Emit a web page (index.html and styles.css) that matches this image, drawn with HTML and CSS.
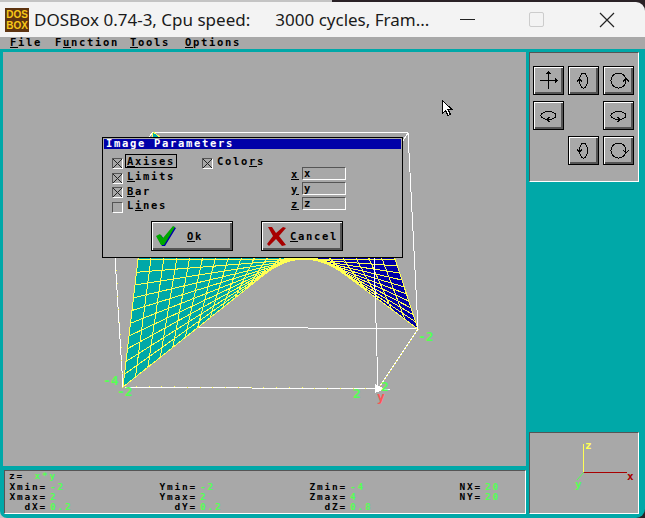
FILE: index.html
```html
<!DOCTYPE html>
<html lang="en">
  <head>
    <meta charset="UTF-8" />
    <meta name="viewport" content="width=device-width, initial-scale=1.0" />
    <title>DOSBox</title>
    <link rel="stylesheet" href="styles.css">
  </head>
  <body>
    <div class="window">
      <header class="titlebar">
        <div class="app-icon"><span>DOS</span><span>BOX</span></div>
        <div class="app-title">DOSBox 0.74-3, Cpu speed:     <span class="app-speed">3000 cycles, Fram...</span></div>
        <div class="win-buttons">
          <span class="win-min"></span>
          <span class="win-max"></span>
          <svg class="win-close" width="16" height="16" viewBox="0 0 16 16"><path d="M1 1L15 15M15 1L1 15" stroke="#222" stroke-width="1.2" fill="none"/></svg>
        </div>
      </header>

      <nav class="menubar">
        <span class="menu-file"><u>F</u>ile</span>
        <span class="menu-function">F<u>u</u>nction</span>
        <span class="menu-tools"><u>T</u>ools</span>
        <span class="menu-options"><u>O</u>ptions</span>
      </nav>

      <div class="desktop">
        <div class="left-col">
          <div class="plot">
            <svg class="plot-svg" id="plot" width="523" height="414" viewBox="3 52 523 414">
              <g id="box-back" class="box-lines">
                <path d="M197 327L418 329"/>
                <path d="M197 327L153 132"/>
                <path d="M153 132L408 133"/>
              </g>
              <g id="mesh"></g>
              <g class="box-lines">
                <path d="M123 387L378 389"/>
                <path d="M378 389L418 329"/>
                <path d="M123 387L115 258L110 187"/>
                <path d="M378 389L372 189"/>
                <path d="M418 329L408 133"/>
                <path d="M408 133L372 189"/>
                <path d="M110 187L372 189"/>
                <path d="M110 187L153 132"/>
                <path d="M378 389L390 389"/>
              </g>
              <g id="ticks"></g>
              <path d="M375 384L385 389L375 393Z" fill="#fff"/>
              <text class="axis-num" x="103" y="385">-4</text>
              <text class="axis-num" x="117" y="396">-2</text>
              <text class="axis-num" x="353" y="398">2</text>
              <text class="axis-num" x="381" y="391">2</text>
              <text class="axis-num" x="418" y="341">-2</text>
              <text class="axis-red" x="377" y="401">y</text>
              <path d="M442.500 100.500V113.500L445.500 110.500L448 115.500L450.500 114.500L448 109.500H452Z" fill="#fff" stroke="#000"/>
            </svg>

            <div class="dialog">
              <div class="dialog-title">Image Parameters</div>
              <div class="dialog-body">
                <div class="check-col">
                  <div class="check-row"><span class="check on"></span><span class="check-label focus"><u>A</u>xises</span></div>
                  <div class="check-row"><span class="check on"></span><span class="check-label"><u>L</u>imits</span></div>
                  <div class="check-row"><span class="check on"></span><span class="check-label"><u>B</u>ar</span></div>
                  <div class="check-row"><span class="check"></span><span class="check-label">L<u>i</u>nes</span></div>
                </div>
                <div class="color-col">
                  <div class="check-row"><span class="check on"></span><span class="check-label">Colo<u>r</u>s</span></div>
                </div>
                <div class="field-col">
                  <div class="field-row"><u>x</u><span class="field">x</span></div>
                  <div class="field-row"><u>y</u><span class="field">y</span></div>
                  <div class="field-row"><u>z</u><span class="field">z</span></div>
                </div>
              </div>
              <div class="dialog-buttons">
                <button class="dos-btn">
                  <svg width="21" height="21" viewBox="0 0 21 21">
                    <path d="M1 11L5 9L8 13L18 1L20 2L9 20L6 20Z" fill="#0000a8"/>
                    <path d="M0 10L4 8L7 12L17 0L19 1L8 19L5 19Z" fill="#00a800"/>
                  </svg>
                  <span class="btn-text ok-text"><u>O</u>k</span>
                </button>
                <button class="dos-btn">
                  <svg width="21" height="21" viewBox="0 0 21 21">
                    <path d="M2 1L6 1L10 7L17 1L20 2L13 10L20 19L16 20L10 13L3 20L1 18L7 10Z" fill="#a80000"/>
                  </svg>
                  <span class="btn-text cancel-text"><u>C</u>ancel</span>
                </button>
              </div>
            </div>
          </div>

          <div class="info">
            <div class="info-z">z= <span class="val">x*y</span></div>
            <div class="info-grid">
              <span class="lbl">Xmin=</span><span class="val">-2</span>
              <span class="lbl">Ymin=</span><span class="val">-2</span>
              <span class="lbl">Zmin=</span><span class="val">-4</span>
              <span class="lbl">NX=</span><span class="val">20</span>
              <span class="lbl">Xmax=</span><span class="val">2</span>
              <span class="lbl">Ymax=</span><span class="val">2</span>
              <span class="lbl">Zmax=</span><span class="val">4</span>
              <span class="lbl">NY=</span><span class="val">20</span>
              <span class="lbl">dX=</span><span class="val">0.2</span>
              <span class="lbl">dY=</span><span class="val">0.2</span>
              <span class="lbl">dZ=</span><span class="val">0.8</span>
            </div>
          </div>
        </div>

        <div class="right-col">
          <div class="tools">
            <button class="tool-btn">
              <svg width="19" height="19" viewBox="0 0 19 19"><path d="M9.500 1V18M1 9.500H18M7.500 3L9.500 1L11.500 3M16 7.500L18 9.500L16 11.500"/></svg>
            </button>
            <button class="tool-btn">
              <svg width="19" height="19" viewBox="0 0 19 19"><ellipse cx="9.500" cy="9.500" rx="4" ry="7.500"/><path d="M3 10.500L5.500 8L8 10.500"/></svg>
            </button>
            <button class="tool-btn">
              <svg width="19" height="19" viewBox="0 0 19 19"><circle cx="9.500" cy="9.500" r="7.500"/><path d="M14 10.500L17 7.500L20 10.500"/></svg>
            </button>
            <button class="tool-btn">
              <svg width="19" height="19" viewBox="0 0 19 19"><ellipse cx="9.500" cy="9.500" rx="7.500" ry="4"/><path d="M10.500 11L8 13.500L10.500 16"/></svg>
            </button>
            <span></span>
            <button class="tool-btn">
              <svg width="19" height="19" viewBox="0 0 19 19"><ellipse cx="9.500" cy="9.500" rx="7.500" ry="4"/><path d="M8.500 11L11 13.500L8.500 16"/></svg>
            </button>
            <span></span>
            <button class="tool-btn">
              <svg width="19" height="19" viewBox="0 0 19 19"><ellipse cx="9.500" cy="9.500" rx="4" ry="7.500"/><path d="M3 8.500L5.500 11L8 8.500"/></svg>
            </button>
            <button class="tool-btn">
              <svg width="19" height="19" viewBox="0 0 19 19"><circle cx="9.500" cy="9.500" r="7.500"/><path d="M14 9L17 12L20 9"/></svg>
            </button>
          </div>
          <div class="mini">
            <svg width="107" height="80" viewBox="530 433 107 80">
              <path d="M583.500 472.500V444" stroke="#ffff55" fill="none"/>
              <path d="M583.500 472.500H627" stroke="#a80000" fill="none"/>
              <path d="M583.500 472.500L577 480" stroke="#55ff55" fill="none"/>
              <text class="mini-z" x="585" y="449">z</text>
              <text class="mini-x" x="627" y="480">x</text>
              <text class="mini-y" x="575" y="488">y</text>
            </svg>
          </div>
        </div>
      </div>
    </div>
    <script src="script.js"></script>
  </body>
</html>
```

FILE: styles.css
```css
body {
  margin: 0;
  padding: 0;
  width: 645px;
  height: 518px;
  overflow: hidden;
  background: linear-gradient(90deg, #c4c4c4 0, #c4c4c4 332px, #2a2226 332px);
  font-family: "DejaVu Sans Mono", "Liberation Mono", monospace;
  font-weight: bold;
}
.window {
  margin-top: 2px;
  height: 516px;
  border-radius: 0 9px 9px 7px;
  overflow: hidden;
  display: flex;
  flex-direction: column;
}

/* windows title bar */
.titlebar {
  height: 35px;
  background-color: #f3f3f3;
  display: flex;
  align-items: center;
  font-family: "Noto Sans", sans-serif;
  font-weight: normal;
}
.app-icon {
  width: 24px;
  height: 24px;
  margin-left: 5px;
  background-color: #5e3410;
  display: flex;
  flex-direction: column;
  align-items: center;
  justify-content: center;
  font-family: "Liberation Sans", sans-serif;
  font-size: 10px;
  line-height: 11px;
  font-weight: bold;
  color: #f8c818;
}
.app-title {
  margin-left: 5px;
  width: 401px;
  font-size: 17px;
  color: #1a1a1a;
  white-space: pre;
}
.app-speed {
  margin-left: 3px;
}
.win-buttons {
  display: flex;
  align-items: center;
}
.win-min {
  width: 15px;
  height: 1px;
  margin-left: 25px;
  background-color: #222;
}
.win-max {
  width: 13px;
  height: 13px;
  margin-left: 54px;
  border: 1px solid #ccc;
  border-radius: 2px;
}
.win-close {
  margin-left: 55px;
}

/* dos menu */
.menubar {
  height: 12px;
  background-color: #a8a8a8;
  display: flex;
  font-size: 10.5px;
  line-height: 11px;
  letter-spacing: 1.68px;
  color: #000;
}
.menu-file { margin-left: 10px; width: 45px; }
.menu-function { width: 75px; }
.menu-tools { width: 55px; }

.desktop {
  flex: 1;
  background-color: #00a8a8;
  display: flex;
  gap: 3px;
  padding: 3px 0 4px 3px;
}
.left-col {
  width: 523px;
  display: flex;
  flex-direction: column;
  gap: 4px;
}
.plot {
  height: 414px;
  position: relative;
  background-color: #a8a8a8;
}
.plot-svg {
  display: block;
  shape-rendering: crispEdges;
}
.box-lines path {
  stroke: #fff;
  fill: none;
}
.axis-num {
  font-size: 13px;
  fill: #55ff55;
}
.axis-red {
  font-size: 13px;
  fill: #ff5555;
}

/* dialog */
.dialog {
  position: absolute;
  left: 99px;
  top: 85px;
  width: 299px;
  height: 119px;
  background-color: #a8a8a8;
  border: 1px solid #000;
  font-size: 10.5px;
  letter-spacing: 1.68px;
  color: #000;
}
.dialog-title {
  margin: 1px 1px 0;
  height: 10px;
  background-color: #0000a8;
  color: #fff;
  line-height: 9px;
  padding-left: 2px;
}
.dialog-body {
  display: flex;
  height: 65px;
  padding: 7px 0 0 9px;
}
.check-col {
  width: 90px;
}
.color-col {
  width: 89px;
}
.check-row {
  height: 14.7px;
  display: flex;
  align-items: center;
  gap: 2px;
}
.check {
  width: 9px;
  height: 9px;
  flex: none;
  border: 1px solid;
  border-color: #555 #fff #fff #555;
  background-size: 100% 100%;
}
.check.on {
  background-image:
    linear-gradient(45deg, transparent 46%, #222 46%, #222 54%, transparent 54%),
    linear-gradient(-45deg, transparent 46%, #222 46%, #222 54%, transparent 54%);
}
.check-label {
  padding: 0 1px;
  margin-bottom: 4px;
  line-height: 12px;
  border: 1px solid transparent;
}
.check-label.focus {
  border-color: #000;
}
.field-col {
  padding-top: 10px;
}
.field-row {
  height: 15px;
  display: flex;
  align-items: center;
  gap: 3px;
}
.field {
  width: 41px;
  height: 11px;
  line-height: 10px;
  padding-left: 1px;
  border: 1px solid;
  border-color: #555 #fff #fff #555;
}
.dialog-buttons {
  display: flex;
  gap: 28px;
  padding-left: 48px;
}
.dos-btn {
  width: 82px;
  height: 30px;
  padding: 0 0 0 4px;
  background-color: #a8a8a8;
  border: 1px solid #000;
  box-shadow: inset 1px 1px 0 #fff, inset -2px -2px 0 #555;
  display: flex;
  align-items: center;
  font: inherit;
  letter-spacing: inherit;
  color: #000;
}
.btn-text {
  line-height: 12px;
}
.ok-text { margin-left: 10px; }
.cancel-text { margin-left: 3px; }

/* bottom info panel */
.info {
  height: 44px;
  width: 522px;
  margin-left: 1px;
  box-sizing: border-box;
  background-color: #a8a8a8;
  border: 1px solid;
  border-color: #555 #fff #fff #555;
  font-size: 9.5px;
  line-height: 10px;
  letter-spacing: 1.78px;
  color: #000;
}
.info-z {
  padding-left: 4px;
}
.info-grid {
  display: grid;
  padding-top: 1px;
  grid-template-columns: 42px 108px 42px 108px 42px 108px 27px 30px;
  grid-auto-rows: 10px;
}
.lbl {
  text-align: right;
  white-space: nowrap;
}
.val {
  color: #55ff55;
  padding-left: 3px;
}

/* right side */
.right-col {
  width: 110px;
  display: flex;
  flex-direction: column;
  justify-content: space-between;
}
.tools {
  height: 130px;
  box-sizing: border-box;
  background-color: #a8a8a8;
  border: 1px solid;
  border-color: #555 #fff #fff #555;
  padding: 13px 0 0 3px;
  display: grid;
  grid-template-columns: repeat(3, 31px);
  grid-auto-rows: 29px;
  column-gap: 4px;
  row-gap: 6px;
}
.tool-btn {
  padding: 0;
  background-color: #a8a8a8;
  border: 1px solid #000;
  box-shadow: inset 1px 1px 0 #fff, inset -2px -2px 0 #555;
  display: flex;
  align-items: center;
  justify-content: center;
}
.tool-btn svg {
  shape-rendering: crispEdges;
  overflow: visible;
}
.tool-btn path,
.tool-btn ellipse,
.tool-btn circle {
  fill: none;
  stroke: #000;
  stroke-width: 1;
}
.mini {
  height: 82px;
  box-sizing: border-box;
  background-color: #a8a8a8;
  border: 1px solid;
  border-color: #555 #fff #fff #555;
}
.mini svg {
  display: block;
}
.mini-z { font-size: 11px; fill: #ffff55; }
.mini-x { font-size: 11px; fill: #a80000; }
.mini-y { font-size: 11px; fill: #55ff55; }
```

FILE: script.js
```js
// surface z = x*y, drawn as a projected bilinear patch
const NS = "http://www.w3.org/2000/svg";
const mesh = document.getElementById("mesh");
const ticks = document.getElementById("ticks");

const P00 = [153, 132];
const P10 = [123, 387];
const P01 = [418, 329];
const P11 = [372, 189];
const N = 20;

function pt(u, v) {
  const a = (1 - u) * (1 - v);
  const b = u * (1 - v);
  const c = (1 - u) * v;
  const d = u * v;
  return [
    a * P00[0] + b * P10[0] + c * P01[0] + d * P11[0],
    a * P00[1] + b * P10[1] + c * P01[1] + d * P11[1],
  ];
}

// far cells first, depth taken from the floor of the box
function depth(u, v) {
  return (1 - u) * (1 - v) * 327 + u * (1 - v) * 387 + (1 - u) * v * 329 + u * v * 389;
}

const cells = [];
for (let i = 0; i < N; i++) {
  for (let j = 0; j < N; j++) {
    cells.push({ u: i / N, v: j / N, d: depth((i + 0.5) / N, (j + 0.5) / N) });
  }
}
cells.sort((a, b) => a.d - b.d);

cells.forEach((c) => {
  const s = 1 / N;
  const p = [pt(c.u, c.v), pt(c.u + s, c.v), pt(c.u + s, c.v + s), pt(c.u, c.v + s)];
  const ax = p[2][0] - p[0][0];
  const ay = p[2][1] - p[0][1];
  const bx = p[3][0] - p[1][0];
  const by = p[3][1] - p[1][1];
  const poly = document.createElementNS(NS, "polygon");
  poly.setAttribute("points", p.map((q) => q.join(",")).join(" "));
  poly.setAttribute("fill", ax * by - ay * bx > 0 ? "#0000a8" : "#00a8a8");
  poly.setAttribute("stroke", "#ffff55");
  mesh.appendChild(poly);
});

// little yellow marks along the box edges
function marks(x1, y1, x2, y2, count) {
  for (let i = 1; i < count; i++) {
    const r = document.createElementNS(NS, "rect");
    r.setAttribute("x", Math.round(x1 + ((x2 - x1) * i) / count));
    r.setAttribute("y", Math.round(y1 + ((y2 - y1) * i) / count) - 1);
    r.setAttribute("width", 1);
    r.setAttribute("height", 1);
    r.setAttribute("fill", "#ffff55");
    ticks.appendChild(r);
  }
}
marks(123, 387, 378, 389, 20);
marks(378, 389, 418, 329, 20);
marks(123, 387, 115, 258, 10);
```
